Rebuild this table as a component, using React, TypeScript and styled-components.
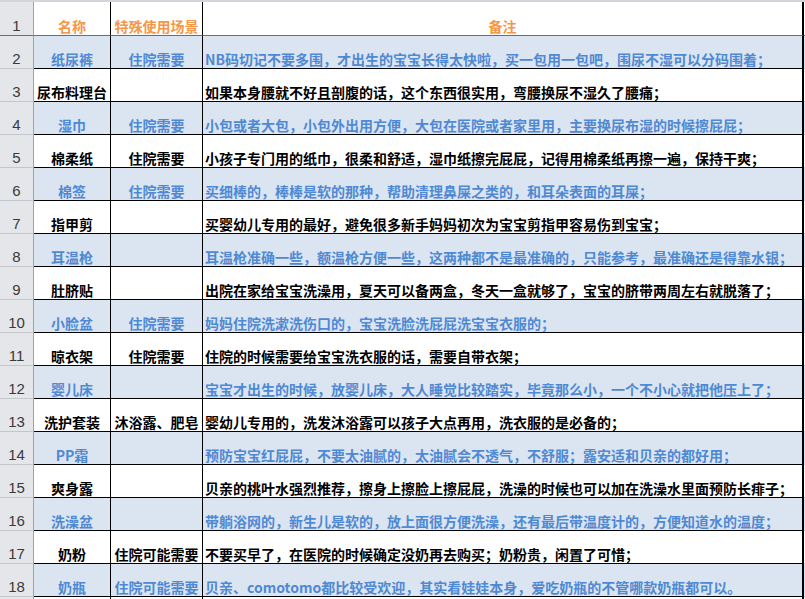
import React from "react";
import styled, { createGlobalStyle } from "styled-components";

type Tone = "head" | "blue" | "plain";

type Item = {
  name: string;
  scene: string;
  note: string;
};

const items: Item[] = [
  { name: "纸尿裤", scene: "住院需要", note: "NB码切记不要多围，才出生的宝宝长得太快啦，买一包用一包吧，围尿不湿可以分码围着；" },
  { name: "尿布料理台", scene: "", note: "如果本身腰就不好且剖腹的话，这个东西很实用，弯腰换尿不湿久了腰痛；" },
  { name: "湿巾", scene: "住院需要", note: "小包或者大包，小包外出用方便，大包在医院或者家里用，主要换尿布湿的时候擦屁屁；" },
  { name: "棉柔纸", scene: "住院需要", note: "小孩子专门用的纸巾，很柔和舒适，湿巾纸擦完屁屁，记得用棉柔纸再擦一遍，保持干爽；" },
  { name: "棉签", scene: "住院需要", note: "买细棒的，棒棒是软的那种，帮助清理鼻屎之类的，和耳朵表面的耳屎；" },
  { name: "指甲剪", scene: "", note: "买婴幼儿专用的最好，避免很多新手妈妈初次为宝宝剪指甲容易伤到宝宝；" },
  { name: "耳温枪", scene: "", note: "耳温枪准确一些，额温枪方便一些，这两种都不是最准确的，只能参考，最准确还是得靠水银；" },
  { name: "肚脐贴", scene: "", note: "出院在家给宝宝洗澡用，夏天可以备两盒，冬天一盒就够了，宝宝的脐带两周左右就脱落了；" },
  { name: "小脸盆", scene: "住院需要", note: "妈妈住院洗漱洗伤口的，宝宝洗脸洗屁屁洗宝宝衣服的；" },
  { name: "晾衣架", scene: "住院需要", note: "住院的时候需要给宝宝洗衣服的话，需要自带衣架；" },
  { name: "婴儿床", scene: "", note: "宝宝才出生的时候，放婴儿床，大人睡觉比较踏实，毕竟那么小，一个不小心就把他压上了；" },
  { name: "洗护套装", scene: "沐浴露、肥皂", note: "婴幼儿专用的，洗发沐浴露可以孩子大点再用，洗衣服的是必备的；" },
  { name: "PP霜", scene: "", note: "预防宝宝红屁屁，不要太油腻的，太油腻会不透气，不舒服；露安适和贝亲的都好用；" },
  { name: "爽身露", scene: "", note: "贝亲的桃叶水强烈推荐，擦身上擦脸上擦屁屁，洗澡的时候也可以加在洗澡水里面预防长痱子；" },
  { name: "洗澡盆", scene: "", note: "带躺浴网的，新生儿是软的，放上面很方便洗澡，还有最后带温度计的，方便知道水的温度；" },
  { name: "奶粉", scene: "住院可能需要", note: "不要买早了，在医院的时候确定没奶再去购买；奶粉贵，闲置了可惜；" },
  { name: "奶瓶", scene: "住院可能需要", note: "贝亲、comotomo都比较受欢迎，其实看娃娃本身，爱吃奶瓶的不管哪款奶瓶都可以。" },
];

const bg = (t: Tone) => (t === "blue" ? "#dbe5f1" : "#ffffff");
const fg = (t: Tone) =>
  t === "head" ? "#f79646" : t === "blue" ? "#4f89d3" : "#000000";

const App = () => {
  return (
    <>
      <GlobalStyle />
      <Sheet>
        <TopEdge />
        <Row $first>
          <RowNum $first>1</RowNum>
          <Cell $tone="head" $first $center>名称</Cell>
          <Cell $tone="head" $first $center>特殊使用场景</Cell>
          <Cell $tone="head" $first $center $edge>备注</Cell>
          <Filler $tone="head" $first />
        </Row>
        {items.map((it, i) => {
          const tone: Tone = i % 2 === 0 ? "blue" : "plain";
          return (
            <Row key={i}>
              <RowNum>{i + 2}</RowNum>
              <Cell $tone={tone} $center>{it.name}</Cell>
              <Cell $tone={tone} $center>{it.scene}</Cell>
              <Cell $tone={tone} $edge>{it.note}</Cell>
              <Filler $tone={tone} />
            </Row>
          );
        })}
        {/* row 19, only its top sliver shows */}
        <Row>
          <RowNum />
          <Cell $tone="plain" />
          <Cell $tone="plain" />
          <Cell $tone="plain" $edge />
          <Filler $tone="plain" />
        </Row>
      </Sheet>
    </>
  );
};

const GlobalStyle = createGlobalStyle`
  html, body {
    margin: 0;
    padding: 0;
    background: #ffffff;
    overflow: hidden;
  }
  body {
    font-family: "Noto Sans CJK SC", "Liberation Sans", sans-serif;
  }
`;

const Sheet = styled.div`
  width: 805px;
  height: 599px;
  overflow: hidden;
  display: flex;
  flex-direction: column;
`;

const TopEdge = styled.div`
  height: 2px;
  flex: none;
  background: #d2d5da;
`;

const Row = styled.div<{ $first?: boolean }>`
  flex: none;
  display: grid;
  grid-template-columns: 34px 77px 92px 601px 1fr;
  height: ${(p) => (p.$first ? "34px" : "33px")};
`;

const RowNum = styled.div<{ $first?: boolean }>`
  box-sizing: border-box;
  background: #e4e6ea;
  border-right: 1px solid #9ea3aa;
  border-bottom: 1px solid ${(p) => (p.$first ? "#6e6e6e" : "#c3c7cc")};
  display: flex;
  align-items: flex-end;
  justify-content: center;
  padding-bottom: 1px;
  font-family: "Liberation Sans", "DejaVu Sans", sans-serif;
  font-size: 15px;
  line-height: 17px;
  color: #3a3a3a;
`;

const Cell = styled.div<{
  $tone: Tone;
  $first?: boolean;
  $center?: boolean;
  $edge?: boolean;
}>`
  box-sizing: border-box;
  background: ${(p) => bg(p.$tone)};
  color: ${(p) => fg(p.$tone)};
  border-right: ${(p) => (p.$edge ? "2px" : "1px")} solid #000000;
  border-bottom: 1px solid ${(p) => (p.$first ? "#6e6e6e" : "#000000")};
  display: flex;
  align-items: flex-end;
  justify-content: ${(p) => (p.$center ? "center" : "flex-start")};
  padding: 0 2px 0 2px;
  white-space: nowrap;
  overflow: hidden;
  font-family: "Noto Sans CJK SC", "Liberation Sans", sans-serif;
  font-weight: 700;
  font-size: 14px;
  line-height: 17px;
`;

const Filler = styled.div<{ $tone: Tone; $first?: boolean }>`
  box-sizing: border-box;
  background: ${(p) => bg(p.$tone)};
  border-bottom: 1px solid ${(p) => (p.$first ? "#6e6e6e" : "#d0d7e5")};
`;

export default App;
